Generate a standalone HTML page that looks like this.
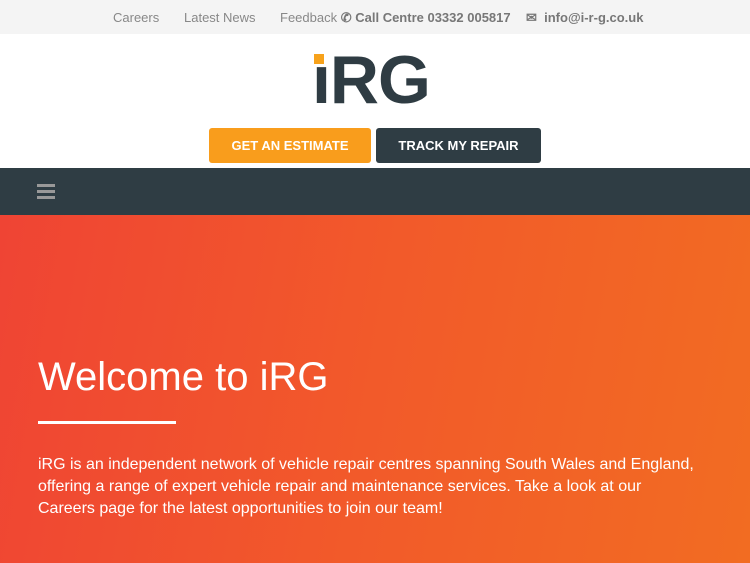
<!DOCTYPE html>
<html><head><style>
html,body{margin:0;width:750px;height:563px;overflow:hidden}
body{font-family:"Liberation Sans",sans-serif;background:#fff;position:relative}
.top{height:34px;background:#f4f4f4;position:relative;font-size:13px;color:#888}
.top span{position:absolute;top:10px;white-space:nowrap}
.top b{color:#777}
.logo{position:absolute;left:312px;top:45px;font-size:68px;font-weight:bold;color:#2f3c43;letter-spacing:-1px;line-height:70px}
.btn{position:absolute;top:128px;height:35px;border-radius:3px;color:#fff;font-weight:bold;font-size:13px;text-align:center;line-height:35px}
.nav{position:absolute;top:168px;left:0;width:750px;height:47px;background:#2f3d44}
.hero{position:absolute;top:215px;left:0;width:750px;height:348px;background:linear-gradient(100deg,#ef4434 0%,#f25a2a 50%,#f26c22 100%);overflow:hidden;color:#fff}
</style></head><body>
<div class="top">
<span style="left:113px">Careers</span>
<span style="left:184px">Latest News</span>
<span style="left:280px">Feedback <b>&#9990;</b> <b>Call Centre 03332 005817</b></span>
<span style="left:526px"><b>&#9993;&nbsp; info@i-r-g.co.uk</b></span>
</div>
<div class="logo">ıRG</div>
<div style="position:absolute;left:314px;top:54px;width:10px;height:10px;background:#f7a21b"></div>
<div class="btn" style="left:209px;width:162px;background:#f99d1c">GET AN ESTIMATE</div>
<div class="btn" style="left:376px;width:165px;background:#2f3d44">TRACK MY REPAIR</div>
<div class="nav">
<div style="position:absolute;left:37px;top:16px;width:18px;height:3px;background:#999;box-shadow:0 6px 0 #999,0 12px 0 #999"></div>
</div>
<div class="hero">
<div style="position:absolute;left:38px;top:137px;font-size:40px;line-height:50px">Welcome to iRG</div>
<div style="position:absolute;left:38px;top:206px;width:138px;height:3px;background:#fff"></div>
<div style="position:absolute;left:38px;top:239px;white-space:nowrap;font-size:16px;line-height:22px">iRG is an independent network of vehicle repair centres spanning South Wales and England,<br>offering a range of expert vehicle repair and maintenance services. Take a look at our<br>Careers page for the latest opportunities to join our team!</div>
</div>
</body></html>
